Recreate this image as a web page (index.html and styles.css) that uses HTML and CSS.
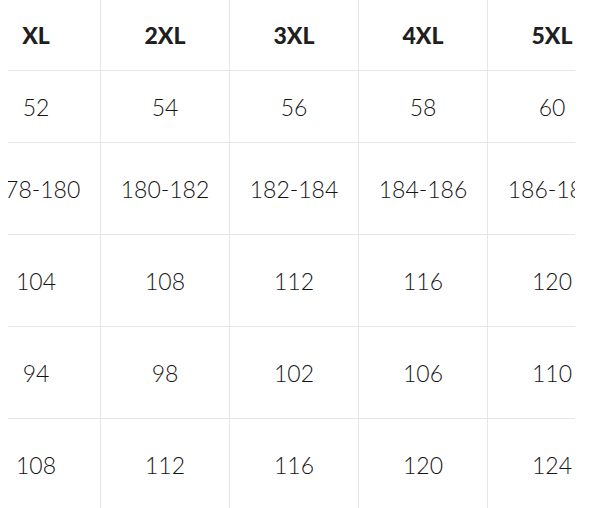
FILE: index.html
```html
<!DOCTYPE html>
<html lang="en">
<head>
<meta charset="utf-8">
<title>Size chart</title>
<link rel="stylesheet" href="styles.css">
</head>
<body>
<div class="scroller">
  <table class="sizes">
    <thead>
      <tr class="head-row">
        <th>XL</th><th>2XL</th><th>3XL</th><th>4XL</th><th>5XL</th>
      </tr>
    </thead>
    <tbody>
      <tr class="row-short"><td>52</td><td>54</td><td>56</td><td>58</td><td>60</td></tr>
      <tr><td>178-180</td><td>180-182</td><td>182-184</td><td>184-186</td><td>186-188</td></tr>
      <tr><td>104</td><td>108</td><td>112</td><td>116</td><td>120</td></tr>
      <tr><td>94</td><td>98</td><td>102</td><td>106</td><td>110</td></tr>
      <tr><td>108</td><td>112</td><td>116</td><td>120</td><td>124</td></tr>
    </tbody>
  </table>
</div>
</body>
</html>
```
FILE: styles.css
```css
html, body {
  margin: 0;
  padding: 0;
  background: #ffffff;
}
body {
  padding-left: 8px;
  font-family: "Lato", "Noto Sans", sans-serif;
}
.scroller {
  width: 567px;
  overflow: hidden;
}
.sizes {
  margin-left: -36px;
  border-collapse: separate;
  border-spacing: 0;
  table-layout: fixed;
  width: 645px;
}
.sizes th,
.sizes td {
  box-sizing: border-box;
  width: 129px;
  padding: 0;
  text-align: center;
  vertical-align: middle;
  border-right: 1px solid #e6e6e6;
  border-bottom: 1px solid #e6e6e6;
  white-space: nowrap;
  overflow: hidden;
}
.sizes th {
  height: 71px;
  font-size: 23px;
  font-weight: 900;
  color: #1f1f1f;
}
.sizes td {
  height: 92px;
  font-size: 23px;
  font-weight: 300;
  color: #141414;
}
.sizes .row-short td {
  height: 72px;
}
.sizes tbody tr:last-child td {
  border-bottom: none;
}
```
